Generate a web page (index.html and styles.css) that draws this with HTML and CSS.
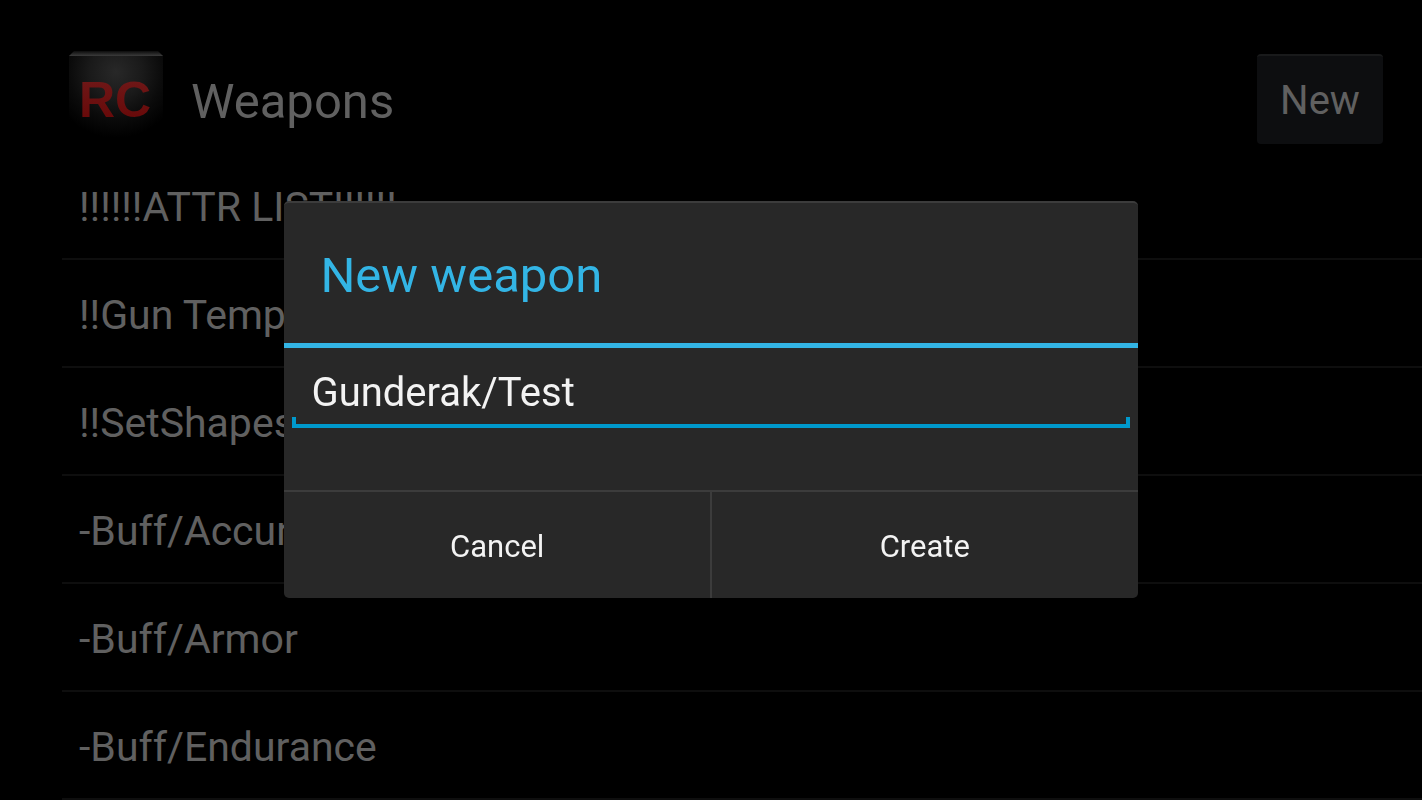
FILE: index.html
```html
<!DOCTYPE html>
<html lang="en">
  <head>
    <meta charset="UTF-8" />
    <meta name="viewport" content="width=device-width, initial-scale=1.0" />
    <title>Weapons</title>
    <link rel="stylesheet" href="styles.css">
  </head>
  <body>
    <header class="header">
      <svg class="logo" viewBox="0 0 94 94" aria-label="RC">
        <defs>
          <radialGradient id="glow" gradientUnits="userSpaceOnUse" cx="47" cy="20" r="66">
            <stop offset="0" stop-color="#282828" />
            <stop offset="0.4" stop-color="#1a1a1a" />
            <stop offset="0.7" stop-color="#0b0b0b" />
            <stop offset="1" stop-color="#000" />
          </radialGradient>
          <linearGradient id="edge" x1="0" y1="0" x2="0" y2="1">
            <stop offset="0" stop-color="#0c0c0c" />
            <stop offset="1" stop-color="#3c3c3c" />
          </linearGradient>
          <linearGradient id="red" x1="0" y1="0" x2="0" y2="1">
            <stop offset="0" stop-color="#701a1a" />
            <stop offset="1" stop-color="#660606" />
          </linearGradient>
        </defs>
        <rect x="0" y="3" width="94" height="91" fill="url(#glow)" />
        <path d="M5 -1H89L94 4H0Z" fill="url(#edge)" />
        <text class="logo-text" x="46" y="65" text-anchor="middle" fill="url(#red)">RC</text>
      </svg>
      <h1>Weapons</h1>
      <button class="new-btn" type="button">New</button>
    </header>

    <ul class="list">
      <li>!!!!!!ATTR LIST!!!!!!</li>
      <li>!!Gun Template</li>
      <li>!!SetShapes</li>
      <li>-Buff/Accuracy</li>
      <li>-Buff/Armor</li>
      <li>-Buff/Endurance</li>
    </ul>

    <!-- New weapon dialog -->
    <div class="overlay">
      <form class="dialog" role="dialog" aria-labelledby="dialog-title">
        <h2><label id="dialog-title" for="weapon-name">New weapon</label></h2>
        <div class="field">
          <input type="text" id="weapon-name" value="Gunderak/Test" spellcheck="false" />
        </div>
        <div class="actions">
          <button type="button">Cancel</button>
          <button type="button">Create</button>
        </div>
      </form>
    </div>
  </body>
</html>
```
FILE: styles.css
```css
* {
  margin: 0;
  padding: 0;
  box-sizing: border-box;
}
html,
body {
  height: 100%;
  overflow: hidden;
  background: #000;
  color: #606060;
  font-family: Roboto, sans-serif;
}

.header {
  display: flex;
  align-items: center;
  height: 152px;
  padding: 46px 39px 0 69px;
}

.logo {
  width: 94px;
  height: 94px;
  overflow: visible;
}
.logo-text {
  font-family: "Liberation Sans", sans-serif;
  font-size: 50px;
  font-weight: bold;
}

.header h1 {
  flex: 1;
  margin-left: 28px;
  padding-top: 4px;
  font-size: 49px;
  font-weight: 400;
}

.new-btn {
  width: 126px;
  height: 90px;
  background: #0d0e10;
  border: none;
  border-top: 2px solid #191a1b;
  border-radius: 4px;
  color: #606060;
  font-family: inherit;
  font-size: 40px;
}

.list {
  margin-left: 62px;
  list-style: none;
}
.list li {
  height: 108px;
  padding-left: 17px;
  border-bottom: 2px solid #0e0e0e;
  font-size: 41px;
  line-height: 110px;
}

.overlay {
  position: fixed;
  inset: 0;
  display: flex;
  justify-content: center;
  align-items: center;
  padding-bottom: 1px;
}

.dialog {
  width: 60%;
  background: #282828;
  border-top: 2px solid #3c3c3c;
  border-radius: 5px;
  overflow: hidden;
}
.dialog h2 {
  padding: 6px 36px 0;
  border-bottom: 5px solid #33b5e5;
  color: #33b5e5;
  font-size: 49px;
  font-weight: 400;
  line-height: 134px;
}

.field {
  position: relative;
  height: 142px;
  padding: 8px;
}
.field input {
  width: 100%;
  height: 72px;
  padding: 4px 19px 0;
  background: none;
  border: none;
  border-bottom: 4px solid #0099cc;
  outline: none;
  color: #f3f3f3;
  font-family: inherit;
  font-size: 40px;
}
/* short upright ends of the text field line */
.field::after {
  content: "";
  position: absolute;
  top: 69px;
  left: 8px;
  right: 8px;
  height: 11px;
  border: solid #0099cc;
  border-width: 0 4px;
  pointer-events: none;
}

.actions {
  display: flex;
  border-top: 2px solid #3c3c3c;
}
.actions button {
  flex: 1;
  height: 106px;
  padding-top: 2px;
  background: none;
  border: none;
  color: #f3f3f3;
  font-family: inherit;
  font-size: 31px;
}
.actions button + button {
  border-left: 2px solid #3c3c3c;
}
```
